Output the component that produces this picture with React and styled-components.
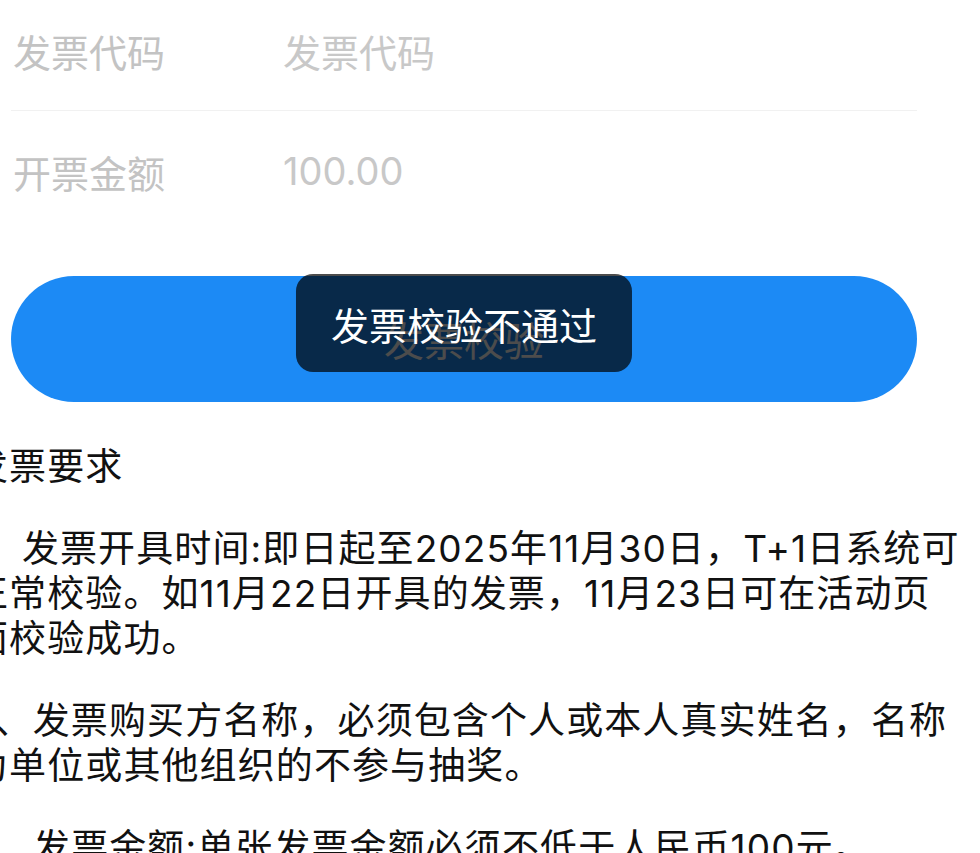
import React from "react";
import styled, { createGlobalStyle } from "styled-components";

const GlobalStyle = createGlobalStyle`
  html, body {
    margin: 0;
    padding: 0;
    background: #fff;
    overflow: hidden;
  }
  body {
    font-family: Inter, "Noto Sans CJK SC", sans-serif;
  }
`;

const Page = styled.div`
  width: 980px;
  height: 853px;
  overflow: hidden;
  background: #fff;
`;

const Form = styled.div`
  margin-top: -10px;
  padding: 0 63px 0 11px;
`;

const Row = styled.div`
  display: flex;
  align-items: center;
  height: 120px;
  padding-left: 2px;
  border-bottom: ${(p) => (p.$divider ? "1px solid #f1f1f1" : "none")};
`;

const Label = styled.span`
  width: 270px;
  flex-shrink: 0;
  font-size: 38px;
  color: #c3c3c3;
`;

const Value = styled.span`
  font-size: 38px;
  color: #c8c8c8;
`;

const ButtonWrap = styled.div`
  position: relative;
  margin: 45px 63px 0 11px;
`;

const SubmitButton = styled.button`
  display: flex;
  align-items: center;
  justify-content: center;
  width: 100%;
  height: 126px;
  border: none;
  border-radius: 63px;
  background: #1c8af5;
  color: #fff;
  font-family: inherit;
  font-size: 40px;
  padding: 0;
`;

// toast floats over the button
const Toast = styled.div`
  position: absolute;
  top: -2px;
  left: 50%;
  transform: translateX(-50%);
  height: 98px;
  padding: 0 35px;
  display: flex;
  align-items: center;
  border-radius: 17px;
  background: rgba(0, 0, 0, 0.7);
  color: #fff;
  font-size: 38px;
  white-space: nowrap;
`;

const Notes = styled.div`
  margin: 42px 0 0 -29px;
  font-size: 37px;
  line-height: 45px;
  letter-spacing: 1.1px;
  color: #111;
`;

const Para = styled.div`
  margin-bottom: 37px;
`;

const Line = styled.span`
  display: block;
  white-space: pre;
`;

const notes = [
  ["发票要求"],
  [
    "1.  发票开具时间:即日起至2025年11月30日，T+1日系统可",
    "正常校验。如11月22日开具的发票，11月23日可在活动页",
    "面校验成功。",
  ],
  [
    "2、发票购买方名称，必须包含个人或本人真实姓名，名称",
    "为单位或其他组织的不参与抽奖。",
  ],
  ["3、发票金额:单张发票金额必须不低于人民币100元。"],
];

export default function App() {
  return (
    <Page>
      <GlobalStyle />
      <Form>
        <Row $divider>
          <Label>发票代码</Label>
          <Value>发票代码</Value>
        </Row>
        <Row>
          <Label>开票金额</Label>
          <Value>100.00</Value>
        </Row>
      </Form>

      <ButtonWrap>
        <SubmitButton>发票校验</SubmitButton>
        <Toast>发票校验不通过</Toast>
      </ButtonWrap>

      <Notes>
        {notes.map((lines, i) => (
          <Para key={i}>
            {lines.map((l, j) => (
              <Line key={j}>{l}</Line>
            ))}
          </Para>
        ))}
      </Notes>
    </Page>
  );
}
